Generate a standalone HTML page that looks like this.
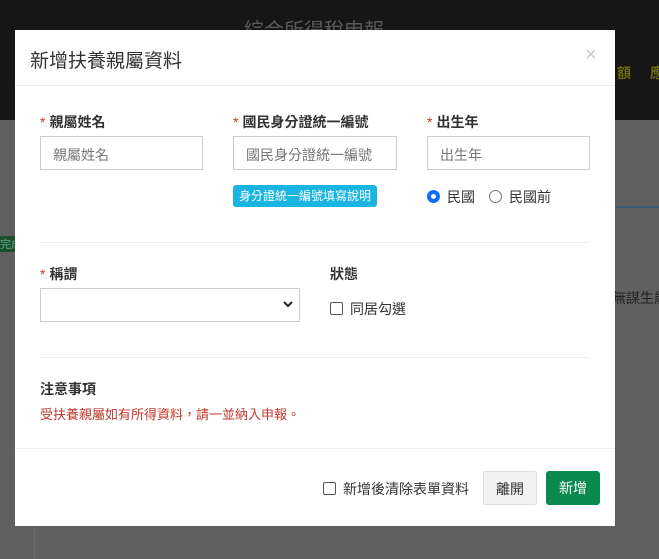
<!DOCTYPE html>
<html><head><meta charset="utf-8"><style>
*{box-sizing:border-box;margin:0;padding:0}
body{width:659px;height:559px;overflow:hidden;position:relative;background:#5f5f5f;font-family:"Liberation Sans","Noto Sans CJK TC",sans-serif;color:#212529}
.top{position:absolute;left:0;top:0;width:659px;height:120px;background:#161616}
.toptitle{position:absolute;left:244px;top:14px;font-size:20px;color:#5a5a5a}
.yel{position:absolute;top:63px;font-size:14px;color:#6d6a16;font-weight:bold}
.green{position:absolute;left:0;top:236px;width:15px;height:16px;background:#1b4f2a;color:#6a8;font-size:11px;white-space:nowrap;overflow:hidden}
.side{position:absolute;left:612px;top:288px;font-size:14px;color:#222;white-space:nowrap}
.rline{position:absolute;left:615px;top:206px;width:44px;height:2px;background:#3a5b73}
.rbg{position:absolute;left:615px;top:120px;width:44px;height:240px;background:#606060}
.lcol{position:absolute;left:34px;top:526px;width:1px;height:33px;background:#6b6b6b}
.modal{position:absolute;left:15px;top:30px;width:600px;height:496px;background:#fff}
.hdr{position:absolute;left:0;top:0;width:600px;height:56px;border-bottom:1px solid #e9ecef}
.hdr h5{position:absolute;left:15px;top:16px;font-size:19px;font-weight:normal;color:#333}
.x{position:absolute;left:570px;top:14px;font-size:20px;color:#c8c8c8}
.lbl{position:absolute;font-size:14px;font-weight:bold;color:#333}
.lbl i{color:#c0392b;font-style:normal;font-weight:normal;margin-right:4px}
.inp{position:absolute;height:34px;border:1px solid #ccc;font-size:14px;color:#777;padding:8px 12px;white-space:nowrap;overflow:hidden}
.badge{position:absolute;left:218px;top:155px;width:144px;height:22px;background:#19b4e0;border-radius:3px;color:#fff;font-size:12px;text-align:center;line-height:22px}
.hr{position:absolute;left:25px;width:550px;height:1px;background:#eceeef}
.rad{position:absolute;width:13px;height:13px;border-radius:50%;border:1px solid #777}
.chk{position:absolute;width:13px;height:13px;border-radius:2px;border:1px solid #555}
.t{position:absolute;font-size:14px;color:#333;white-space:nowrap}
.btn{position:absolute;top:441px;height:34px;border-radius:3px;font-size:14px;text-align:center;line-height:34px}
</style></head><body>
<div class="top"></div>
<div class="toptitle">綜合所得稅申報</div>
<div class="yel" style="left:617px">額</div>
<div class="yel" style="left:650px">應</div>
<div class="rbg"></div>
<div class="rline"></div>
<div class="green">完成</div>
<div class="side">無謀生能</div>
<div class="lcol"></div>
<div class="modal">
 <div class="hdr"><h5>新增扶養親屬資料</h5><div class="x">×</div></div>
 <div class="lbl" style="left:25px;top:82px"><i>*</i>親屬姓名</div>
 <div class="lbl" style="left:218px;top:82px"><i>*</i>國民身分證統一編號</div>
 <div class="lbl" style="left:412px;top:82px"><i>*</i>出生年</div>
 <div class="inp" style="left:25px;top:106px;width:163px">親屬姓名</div>
 <div class="inp" style="left:218px;top:106px;width:164px">國民身分證統一編號</div>
 <div class="inp" style="left:412px;top:106px;width:163px">出生年</div>
 <div class="badge">身分證統一編號填寫說明</div>
 <div class="rad" style="left:412px;top:160px;border:4px solid #0d6efd"></div>
 <div class="t" style="left:432px;top:157px">民國</div>
 <div class="rad" style="left:474px;top:160px"></div>
 <div class="t" style="left:494px;top:157px">民國前</div>
 <div class="hr" style="top:212px"></div>
 <div class="lbl" style="left:25px;top:234px"><i>*</i>稱謂</div>
 <div class="lbl" style="left:315px;top:234px">狀態</div>
 <div class="inp" style="left:25px;top:258px;width:260px"></div>
 <svg style="position:absolute;left:268px;top:270px" width="10" height="8"><path d="M1 2 L5 6 L9 2" stroke="#222" stroke-width="2" fill="none"/></svg>
 <div class="chk" style="left:315px;top:272px"></div>
 <div class="t" style="left:335px;top:269px">同居勾選</div>
 <div class="hr" style="top:327px"></div>
 <div class="lbl" style="left:25px;top:349px">注意事項</div>
 <div class="t" style="left:25px;top:374px;color:#c0392b;font-size:13px">受扶養親屬如有所得資料，請一並納入申報。</div>
 <div style="position:absolute;left:0;top:418px;width:600px;height:1px;background:#eceeef"></div>
 <div class="chk" style="left:308px;top:452px"></div>
 <div class="t" style="left:328px;top:449px">新增後清除表單資料</div>
 <div class="btn" style="left:468px;width:54px;background:#f2f2f2;border:1px solid #ddd;color:#333">離開</div>
 <div class="btn" style="left:531px;width:54px;background:#0b8a4e;color:#fff">新增</div>
</div>
</body></html>
